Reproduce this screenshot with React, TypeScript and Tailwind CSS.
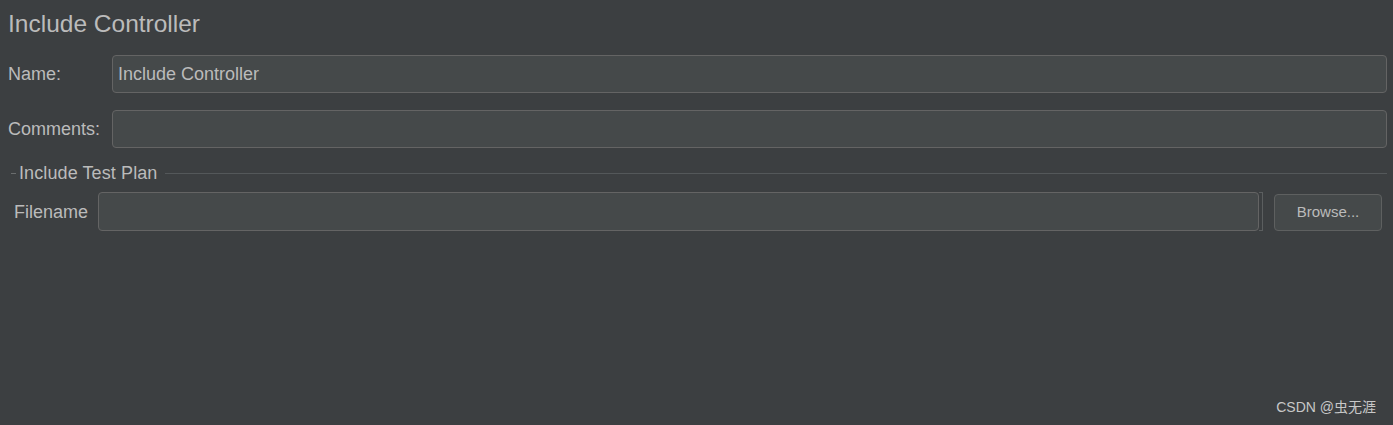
import React from 'react';

const field = 'rounded-[4px] border border-[#646464] bg-[#45494a]';

export default function App() {
  return (
    <div className="relative h-[425px] w-full overflow-hidden bg-[#3c3f41] font-['Liberation_Sans',Arial,sans-serif] text-[18px] text-[#bbbbbb]">
      {/* Title */}
      <h1 className="h-[55px] pl-[8px] pt-[12px] text-[24.5px] leading-[24px] font-normal">Include Controller</h1>

      {/* Name */}
      <div className="flex h-[38px] items-center pl-[8px] pr-[6px]">
        <label className="w-[104px] shrink-0 pt-px">Name:</label>
        <div className={`flex h-full flex-1 items-center px-[5px] pt-px ${field}`}>Include Controller</div>
      </div>

      {/* Comments */}
      <div className="mt-[17px] flex h-[38px] items-center pl-[8px] pr-[6px]">
        <label className="w-[104px] shrink-0 pt-px">Comments:</label>
        <div className={`h-full flex-1 ${field}`} />
      </div>

      {/* Group header */}
      <div className="mt-[16px] flex h-[18px] items-center pl-[11px] pr-[6px]">
        <div className="h-px w-[5px] bg-[#6a6d6e]" />
        <span className="ml-[3px] leading-[18px] tracking-[0.1px]">Include Test Plan</span>
        <div className="ml-[8px] h-px flex-1 bg-[#54585a]" />
      </div>

      {/* Filename */}
      <div className="mt-[10px] flex h-[39px] items-center pl-[14px] pr-[11px]">
        <label className="w-[84px] shrink-0 pt-px">Filename</label>
        <div className={`h-full flex-1 ${field}`} />
        <div className="h-full w-[4px] border-y border-r border-[#5b5e5f]" />
        <button className="ml-[11px] h-[37px] w-[108px] self-end rounded-[4px] border border-[#5e6060] bg-[#45494a] text-[15px] text-[#bbbbbb]">
          Browse...
        </button>
      </div>

      {/* watermark */}
      <div className="absolute bottom-[7px] right-[17px] font-['Liberation_Sans','Noto_Sans_CJK_SC',sans-serif] text-[14px] text-[#c8c8c8]">
        CSDN @虫无涯
      </div>
    </div>
  );
}
